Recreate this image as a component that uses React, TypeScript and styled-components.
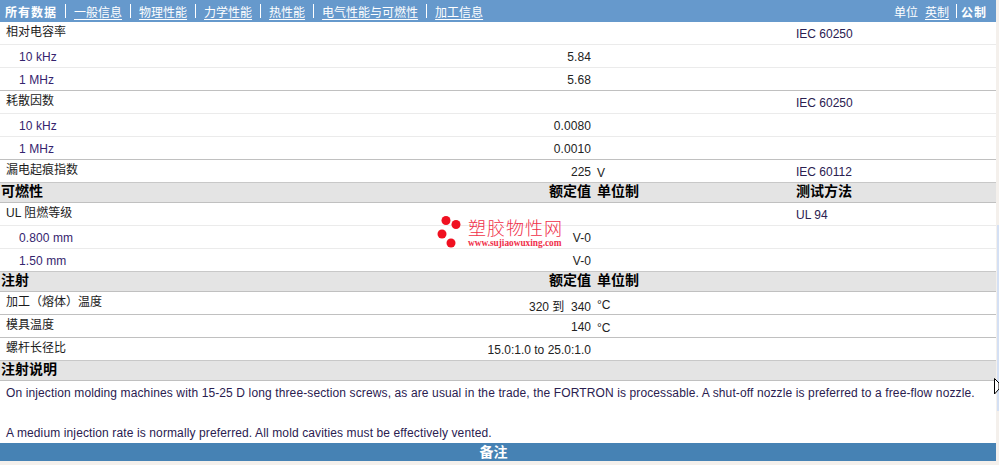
import styled, { createGlobalStyle } from 'styled-components';

const GlobalStyle = createGlobalStyle`
  html, body { margin: 0; padding: 0; background: #f4f0ec; }
  body { font-family: 'Liberation Sans', 'Noto Sans CJK SC', sans-serif; font-size: 12px; color: #222; }
`;

type RowData = { label: string; value?: string; unit?: string; method?: string; sub?: boolean; dark?: boolean };

const Page = styled.div`
  position: relative;
  width: 999px;
  height: 465px;
  overflow: hidden;
`;
const Sheet = styled.div`
  width: 996px;
  background: #fff;
`;
const TopBar = styled.div`
  height: 22px;
  background: #6699cc;
  color: #fff;
  display: flex;
  align-items: center;
  justify-content: space-between;
  padding: 0 9px 0 5px;
  font-size: 12px;
`;
const NavGroup = styled.div`
  display: flex;
  align-items: center;
`;
const NavLink = styled.span`
  text-decoration: underline;
  text-underline-offset: 2px;
`;
const NavCurrent = styled.span`
  font-weight: 700;
  letter-spacing: 1px;
`;
const NavSep = styled.span`
  width: 1px;
  height: 14px;
  background: #fff;
  margin: 0 8px;
`;
const UnitLabel = styled.span`
  margin-right: 7px;
`;
const UnitSep = styled(NavSep)`
  margin: 0 4px 0 7px;
`;
const Grid = styled.div`
  display: grid;
  grid-template-columns: 591px 199px 206px;
  align-items: center;
`;
const DataRow = styled(Grid)<{ $dark?: boolean }>`
  height: 22px;
  border-bottom: 1px solid ${p => (p.$dark ? '#c0c0c0' : '#ebebeb')};
`;
const Label = styled.div<{ $sub?: boolean }>`
  display: flex;
  justify-content: space-between;
  padding-left: ${p => (p.$sub ? '19px' : '6px')};
  padding-bottom: ${p => (p.$sub ? '0' : '5px')};
  padding-top: ${p => (p.$sub ? '2px' : '0')};
  color: ${p => (p.$sub ? '#35246e' : '#1c1c1c')};
  letter-spacing: ${p => (p.$sub ? '0.1px' : '0')};
`;
const Value = styled.span<{ $sub?: boolean }>`
  color: #222;
  margin-top: ${p => (p.$sub ? '0' : '5px')};
  margin-bottom: ${p => (p.$sub ? '0' : '-5px')};
`;
const Unit = styled.div`
  padding: 3px 0 0 6px;
`;
const Method = styled.div`
  padding: 2px 0 0 6px;
  color: #2a2050;
`;
const SectionHead = styled(Grid)`
  height: 19px;
  background: #e4e4e4;
  border-top: 1px solid #c8c8c8;
  border-bottom: 1px solid #c0c0c0;
  font-size: 14px;
  line-height: 16px;
  font-weight: 700;
  color: #000;
  margin-top: -1px;
`;
const SectionTitle = styled.div`
  display: flex;
  justify-content: space-between;
  padding: 0 0 4px 1px;
`;
const HeadCell = styled.div`
  padding: 0 0 4px 6px;
`;
const Note = styled.div`
  height: 60px;
  padding: 2px 6px 0;
  line-height: 20px;
  color: #2a2050;
`;
const NoteLine = styled.p<{ $gap?: boolean }>`
  margin: ${p => (p.$gap ? '20px' : '0')} 0 0;
  letter-spacing: 0.12px;
`;
const Footer = styled.div`
  height: 18px;
  background: #4682b4;
  color: #fff;
  font-size: 14px;
  font-weight: 700;
  text-align: center;
  line-height: 18px;
  padding-right: 9px;
`;
const Watermark = styled.div`
  position: absolute;
  left: 437px;
  top: 214px;
  display: flex;
  align-items: center;
  gap: 5px;
  color: #f0304a;
`;
const WatermarkText = styled.div`
  display: flex;
  flex-direction: column;
  padding-top: 4px;
`;
const WatermarkTitle = styled.span`
  font-size: 18px;
  line-height: 20px;
  font-weight: 300;
  letter-spacing: 1px;
`;
const WatermarkUrl = styled.span`
  font-family: 'Liberation Serif', serif;
  font-size: 9.3px;
  line-height: 9px;
  font-weight: 700;
  white-space: nowrap;
`;
const Cursor = styled.svg`
  position: absolute;
  left: 994px;
  top: 378px;
`;
const ScrollHint = styled.div`
  position: absolute;
  left: 997px;
  top: 225px;
  width: 2px;
  height: 186px;
  background: #d4e0f4;
`;

const group1: RowData[] = [
  { label: '相对电容率', method: 'IEC 60250' },
  { label: '10 kHz', value: '5.84', sub: true },
  { label: '1 MHz', value: '5.68', sub: true, dark: true },
  { label: '耗散因数', method: 'IEC 60250' },
  { label: '10 kHz', value: '0.0080', sub: true },
  { label: '1 MHz', value: '0.0010', sub: true, dark: true },
  { label: '漏电起痕指数', value: '225', unit: 'V', method: 'IEC 60112', dark: true },
];
const group2: RowData[] = [
  { label: 'UL 阻燃等级', method: 'UL 94' },
  { label: '0.800 mm', value: 'V-0', sub: true },
  { label: '1.50 mm', value: 'V-0', sub: true, dark: true },
];
const group3: RowData[] = [
  { label: '加工（熔体）温度', value: '320 到\u00a0\u00a0340', unit: '°C', dark: true },
  { label: '模具温度', value: '140', unit: '°C', dark: true },
  { label: '螺杆长径比', value: '15.0:1.0 to 25.0:1.0', dark: true },
];

const Rows = ({ rows }: { rows: RowData[] }) => (
  <>
    {rows.map((r, i) => (
      <DataRow key={i} $dark={r.dark}>
        <Label $sub={r.sub}>
          <span>{r.label}</span>
          {r.value && <Value $sub={r.sub}>{r.value}</Value>}
        </Label>
        <Unit>{r.unit}</Unit>
        <Method>{r.method}</Method>
      </DataRow>
    ))}
  </>
);

const Head = ({ title, rated, method }: { title: string; rated?: boolean; method?: boolean }) => (
  <SectionHead>
    <SectionTitle>
      <span>{title}</span>
      {rated && <span>额定值</span>}
    </SectionTitle>
    <HeadCell>{rated && '单位制'}</HeadCell>
    <HeadCell>{method && '测试方法'}</HeadCell>
  </SectionHead>
);

export default function App() {
  return (
    <Page>
      <GlobalStyle />
      <Sheet>
        <TopBar>
          <NavGroup>
            <NavCurrent>所有数据</NavCurrent>
            <NavSep />
            <NavLink>一般信息</NavLink>
            <NavSep />
            <NavLink>物理性能</NavLink>
            <NavSep />
            <NavLink>力学性能</NavLink>
            <NavSep />
            <NavLink>热性能</NavLink>
            <NavSep />
            <NavLink>电气性能与可燃性</NavLink>
            <NavSep />
            <NavLink>加工信息</NavLink>
          </NavGroup>
          <NavGroup>
            <UnitLabel>单位</UnitLabel>
            <NavLink>英制</NavLink>
            <UnitSep />
            <NavCurrent>公制</NavCurrent>
          </NavGroup>
        </TopBar>
        <Rows rows={group1} />
        <Head title="可燃性" rated method />
        <Rows rows={group2} />
        <Head title="注射" rated />
        <Rows rows={group3} />
        <Head title="注射说明" />
        <Note>
          <NoteLine>On injection molding machines with 15-25 D long three-section screws, as are usual in the trade, the FORTRON is processable. A shut-off nozzle is preferred to a free-flow nozzle.</NoteLine>
          <NoteLine $gap>A medium injection rate is normally preferred. All mold cavities must be effectively vented.</NoteLine>
        </Note>
        <Footer>备注</Footer>
      </Sheet>
      <Watermark>
        <svg width="26" height="34" viewBox="0 0 26 34">
          <circle cx="9" cy="6.5" r="4.5" fill="#f01020" />
          <circle cx="19" cy="10.5" r="4.5" fill="#f01020" />
          <circle cx="5" cy="20" r="4.5" fill="#f01020" />
          <circle cx="14" cy="29" r="4.5" fill="#f01020" />
        </svg>
        <WatermarkText>
          <WatermarkTitle>塑胶物性网</WatermarkTitle>
          <WatermarkUrl>www.sujiaowuxing.com</WatermarkUrl>
        </WatermarkText>
      </Watermark>
      <ScrollHint />
      <Cursor width="5" height="18" viewBox="0 0 5 18">
        <path d="M0.5 0.5 L5 5 L5 11 L0.5 16 Z" fill="#fff" stroke="#000" />
      </Cursor>
    </Page>
  );
}
